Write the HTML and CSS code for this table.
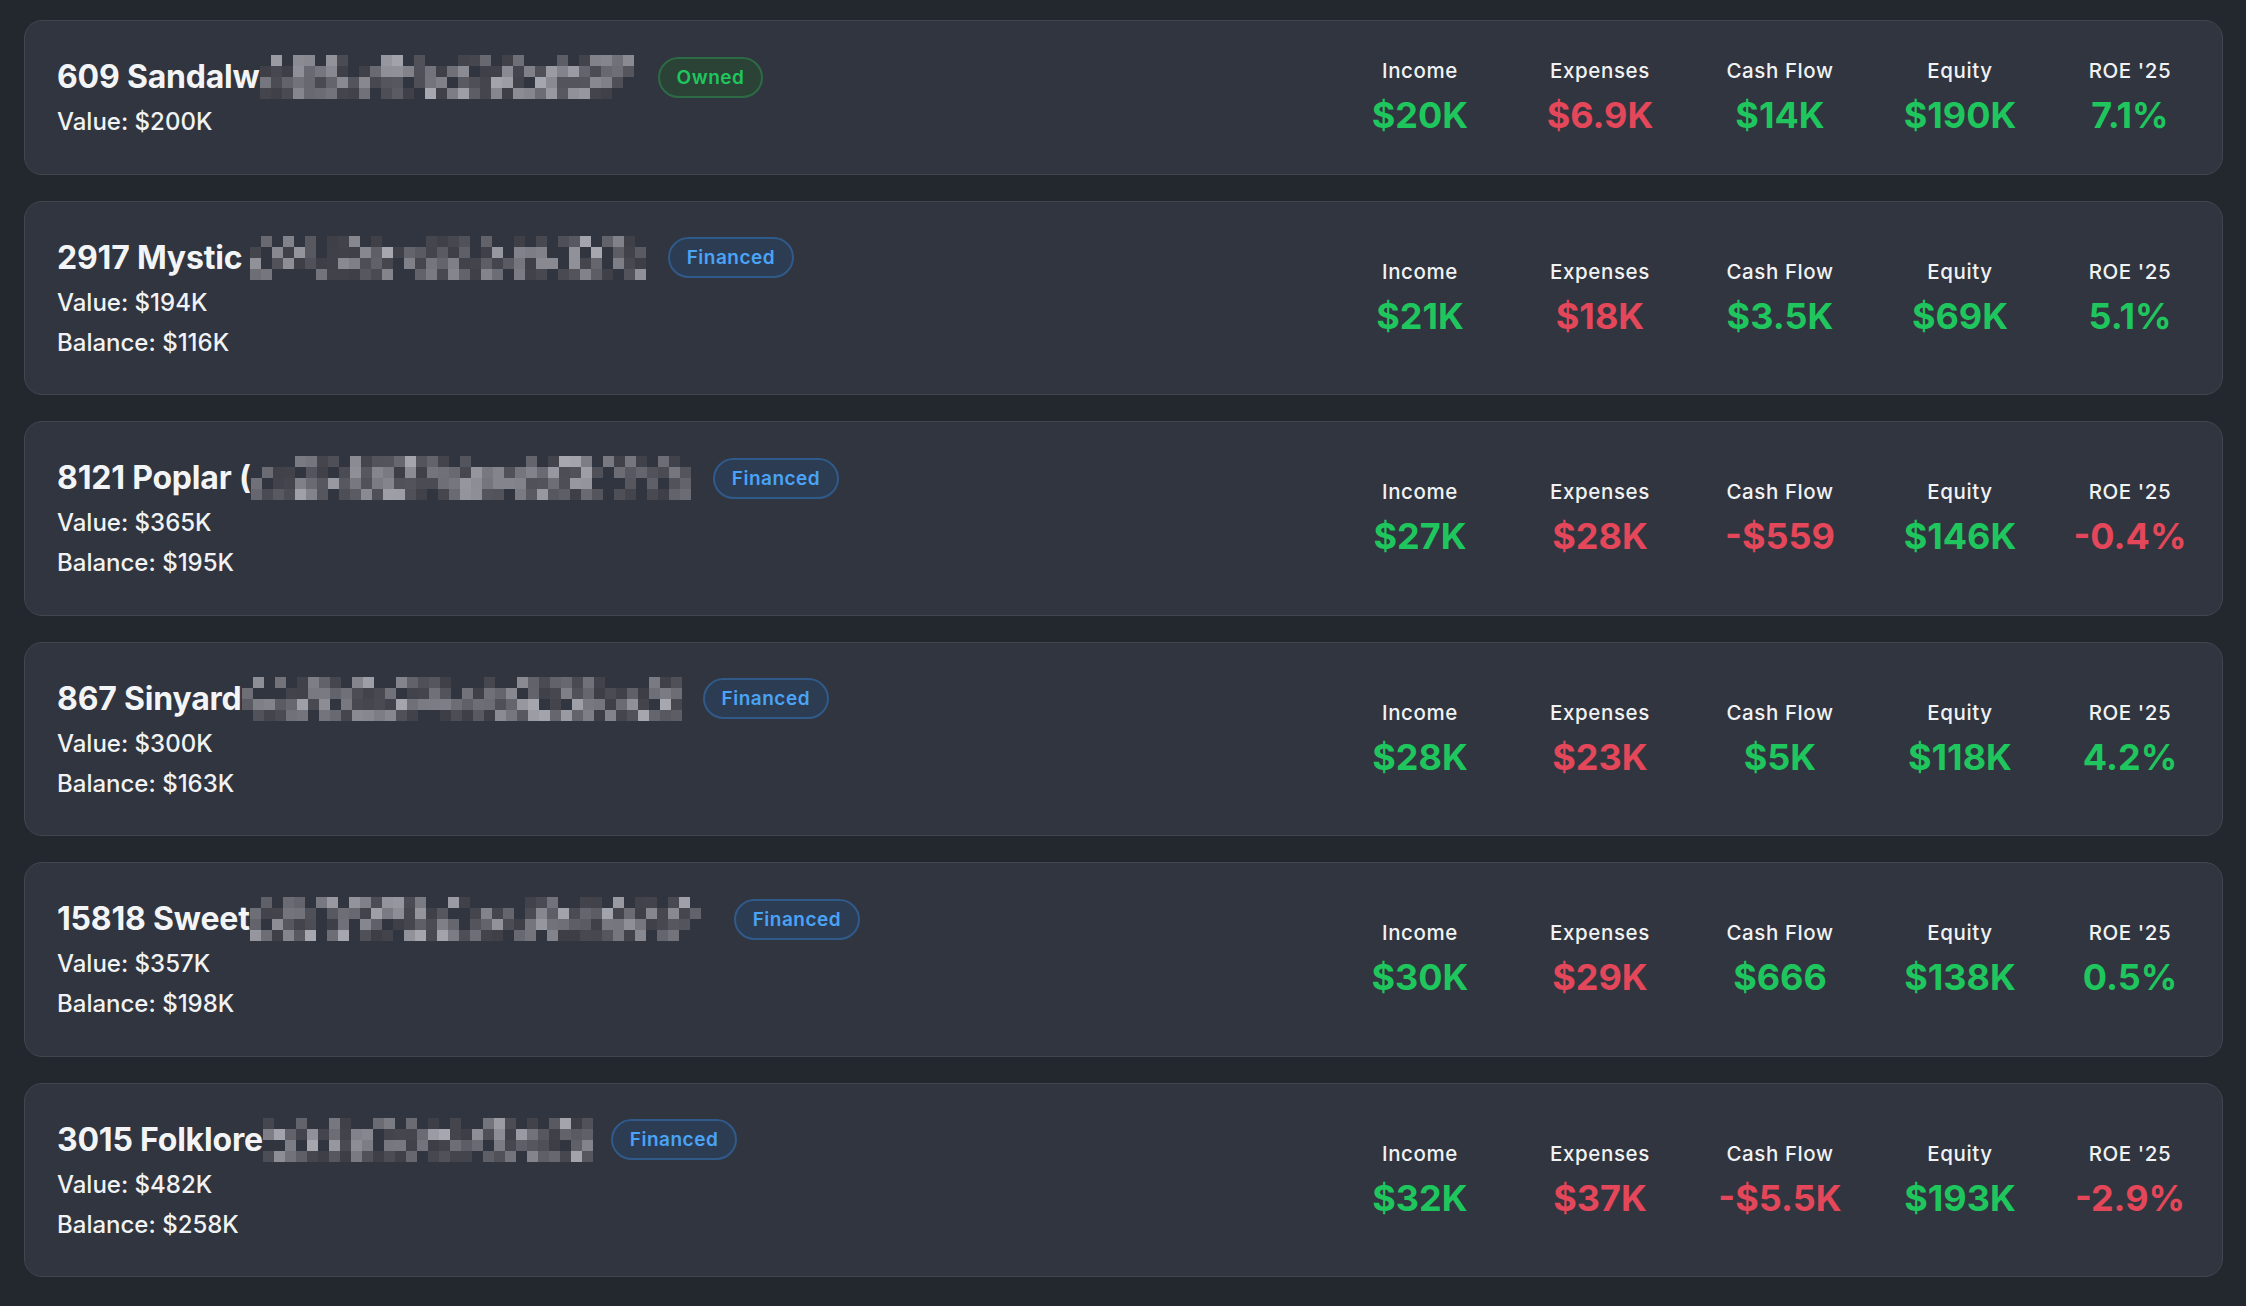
FILE: index.html
```html
<!DOCTYPE html>
<html lang="en">
<head>
<meta charset="utf-8">
<title>Properties</title>
<link rel="stylesheet" href="styles.css">
</head>
<body>
<main class="list">
  <article class="card">
    <div class="info">
      <div class="title-row">
        <h2 class="title">609 Sandalw<span class="redact" data-w="384"></span></h2>
        <span class="badge owned">Owned</span>
      </div>
      <div class="sub">Value: $200K</div>
    </div>
    <div class="metrics">
      <div class="metric"><div class="label">Income</div><div class="value pos">$20K</div></div>
      <div class="metric"><div class="label">Expenses</div><div class="value neg">$6.9K</div></div>
      <div class="metric"><div class="label">Cash Flow</div><div class="value pos">$14K</div></div>
      <div class="metric"><div class="label">Equity</div><div class="value pos">$190K</div></div>
      <div class="metric"><div class="label">ROE '25</div><div class="value pos">7.1%</div></div>
    </div>
  </article>

  <article class="card">
    <div class="info">
      <div class="title-row">
        <h2 class="title">2917 Mystic&nbsp;<span class="redact" data-w="404"></span></h2>
        <span class="badge financed">Financed</span>
      </div>
      <div class="sub">Value: $194K</div>
      <div class="sub">Balance: $116K</div>
    </div>
    <div class="metrics">
      <div class="metric"><div class="label">Income</div><div class="value pos">$21K</div></div>
      <div class="metric"><div class="label">Expenses</div><div class="value neg">$18K</div></div>
      <div class="metric"><div class="label">Cash Flow</div><div class="value pos">$3.5K</div></div>
      <div class="metric"><div class="label">Equity</div><div class="value pos">$69K</div></div>
      <div class="metric"><div class="label">ROE '25</div><div class="value pos">5.1%</div></div>
    </div>
  </article>

  <article class="card">
    <div class="info">
      <div class="title-row">
        <h2 class="title">8121 Poplar (<span class="redact" data-w="448"></span></h2>
        <span class="badge financed">Financed</span>
      </div>
      <div class="sub">Value: $365K</div>
      <div class="sub">Balance: $195K</div>
    </div>
    <div class="metrics">
      <div class="metric"><div class="label">Income</div><div class="value pos">$27K</div></div>
      <div class="metric"><div class="label">Expenses</div><div class="value neg">$28K</div></div>
      <div class="metric"><div class="label">Cash Flow</div><div class="value neg">-$559</div></div>
      <div class="metric"><div class="label">Equity</div><div class="value pos">$146K</div></div>
      <div class="metric"><div class="label">ROE '25</div><div class="value neg">-0.4%</div></div>
    </div>
  </article>

  <article class="card">
    <div class="info">
      <div class="title-row">
        <h2 class="title">867 Sinyard<span class="redact" data-w="447"></span></h2>
        <span class="badge financed">Financed</span>
      </div>
      <div class="sub">Value: $300K</div>
      <div class="sub">Balance: $163K</div>
    </div>
    <div class="metrics">
      <div class="metric"><div class="label">Income</div><div class="value pos">$28K</div></div>
      <div class="metric"><div class="label">Expenses</div><div class="value neg">$23K</div></div>
      <div class="metric"><div class="label">Cash Flow</div><div class="value pos">$5K</div></div>
      <div class="metric"><div class="label">Equity</div><div class="value pos">$118K</div></div>
      <div class="metric"><div class="label">ROE '25</div><div class="value pos">4.2%</div></div>
    </div>
  </article>

  <article class="card">
    <div class="info">
      <div class="title-row">
        <h2 class="title">15818 Sweet<span class="redact" data-w="470"></span></h2>
        <span class="badge financed">Financed</span>
      </div>
      <div class="sub">Value: $357K</div>
      <div class="sub">Balance: $198K</div>
    </div>
    <div class="metrics">
      <div class="metric"><div class="label">Income</div><div class="value pos">$30K</div></div>
      <div class="metric"><div class="label">Expenses</div><div class="value neg">$29K</div></div>
      <div class="metric"><div class="label">Cash Flow</div><div class="value pos">$666</div></div>
      <div class="metric"><div class="label">Equity</div><div class="value pos">$138K</div></div>
      <div class="metric"><div class="label">ROE '25</div><div class="value pos">0.5%</div></div>
    </div>
  </article>

  <article class="card">
    <div class="info">
      <div class="title-row">
        <h2 class="title">3015 Folklore<span class="redact" data-w="334"></span></h2>
        <span class="badge financed">Financed</span>
      </div>
      <div class="sub">Value: $482K</div>
      <div class="sub">Balance: $258K</div>
    </div>
    <div class="metrics">
      <div class="metric"><div class="label">Income</div><div class="value pos">$32K</div></div>
      <div class="metric"><div class="label">Expenses</div><div class="value neg">$37K</div></div>
      <div class="metric"><div class="label">Cash Flow</div><div class="value neg">-$5.5K</div></div>
      <div class="metric"><div class="label">Equity</div><div class="value pos">$193K</div></div>
      <div class="metric"><div class="label">ROE '25</div><div class="value neg">-2.9%</div></div>
    </div>
  </article>
</main>
<script src="mosaic.js"></script>
</body>
</html>
```

FILE: styles.css
```css
* { box-sizing: border-box; }

body {
  margin: 0;
  background: #23282f;
  color: #f1f2f4;
  font-family: Inter, "Noto Sans", "Liberation Sans", sans-serif;
}

.list {
  display: flex;
  flex-direction: column;
  gap: 26px;
  padding: 20px 23px 20px 24px;
}

.card {
  display: flex;
  justify-content: space-between;
  align-items: center;
  background: #30353f;
  border: 1px solid #41464f;
  border-radius: 18px;
  padding: 34px 32px 34.5px;
}

.info {
  display: flex;
  flex-direction: column;
  gap: 6px;
}

.title-row {
  display: flex;
  align-items: center;
  gap: 14px;
  height: 44px;
}

.title {
  margin: 0;
  display: flex;
  align-items: center;
  font-size: 32px;
  line-height: 44px;
  font-weight: 700;
  letter-spacing: -0.2px;
  white-space: pre;
  color: #f3f4f6;
}

.redact {
  display: grid;
  grid-template-columns: repeat(auto-fill, 11px);
  grid-auto-rows: 11px;
  height: 44px;
  overflow: hidden;
  letter-spacing: 0;
}

.redact i {
  display: block;
}

.badge {
  display: inline-flex;
  align-items: center;
  height: 41px;
  padding: 0 17px;
  border-radius: 999px;
  border: 2px solid;
  font-size: 19px;
  font-weight: 600;
  letter-spacing: 0.5px;
}

.badge.owned {
  color: #1fc65d;
  background: #2b4236;
  border-color: #2c6b44;
}

.badge.financed {
  color: #4aa3f6;
  background: #2c3d53;
  border-color: #305a8a;
}

.sub {
  font-size: 24px;
  line-height: 34px;
  font-weight: 500;
  color: #f1f2f4;
}

.metrics {
  display: flex;
  gap: 40px;
}

.metric {
  width: 140px;
  text-align: center;
}

.metric:last-child {
  width: 120px;
}

.label {
  font-size: 20.5px;
  line-height: 28px;
  font-weight: 500;
  letter-spacing: 0.6px;
  color: #f1f2f4;
}

.value {
  margin-top: 8px;
  font-size: 36px;
  line-height: 44px;
  font-weight: 700;
}

.value.pos { color: #1fc65d; }
.value.neg { color: #e4475a; }
```

FILE: mosaic.js
```js
document.querySelectorAll('.redact').forEach(function (el, idx) {
  var seed = (idx + 3) * 7919;
  function rnd() {
    seed = (seed * 16807) % 2147483647;
    return seed / 2147483647;
  }
  var w = parseInt(el.dataset.w, 10);
  el.style.width = w + 'px';
  var cols = Math.floor(w / 11);
  for (var r = 0; r < 4; r++) {
    for (var c = 0; c < cols; c++) {
      var cell = document.createElement('i');
      var v = rnd();
      var blank = (r === 0 ? 0.45 : 0.12);
      if (c > cols - 3 && idx === 4) blank = 0.7;
      if (v > blank) {
        var g = Math.round(62 + Math.pow(rnd(), 1.5) * 105);
        var b = Math.min(255, g + 8);
        cell.style.background = 'rgb(' + g + ',' + g + ',' + b + ')';
      }
      el.appendChild(cell);
    }
  }
});
```
